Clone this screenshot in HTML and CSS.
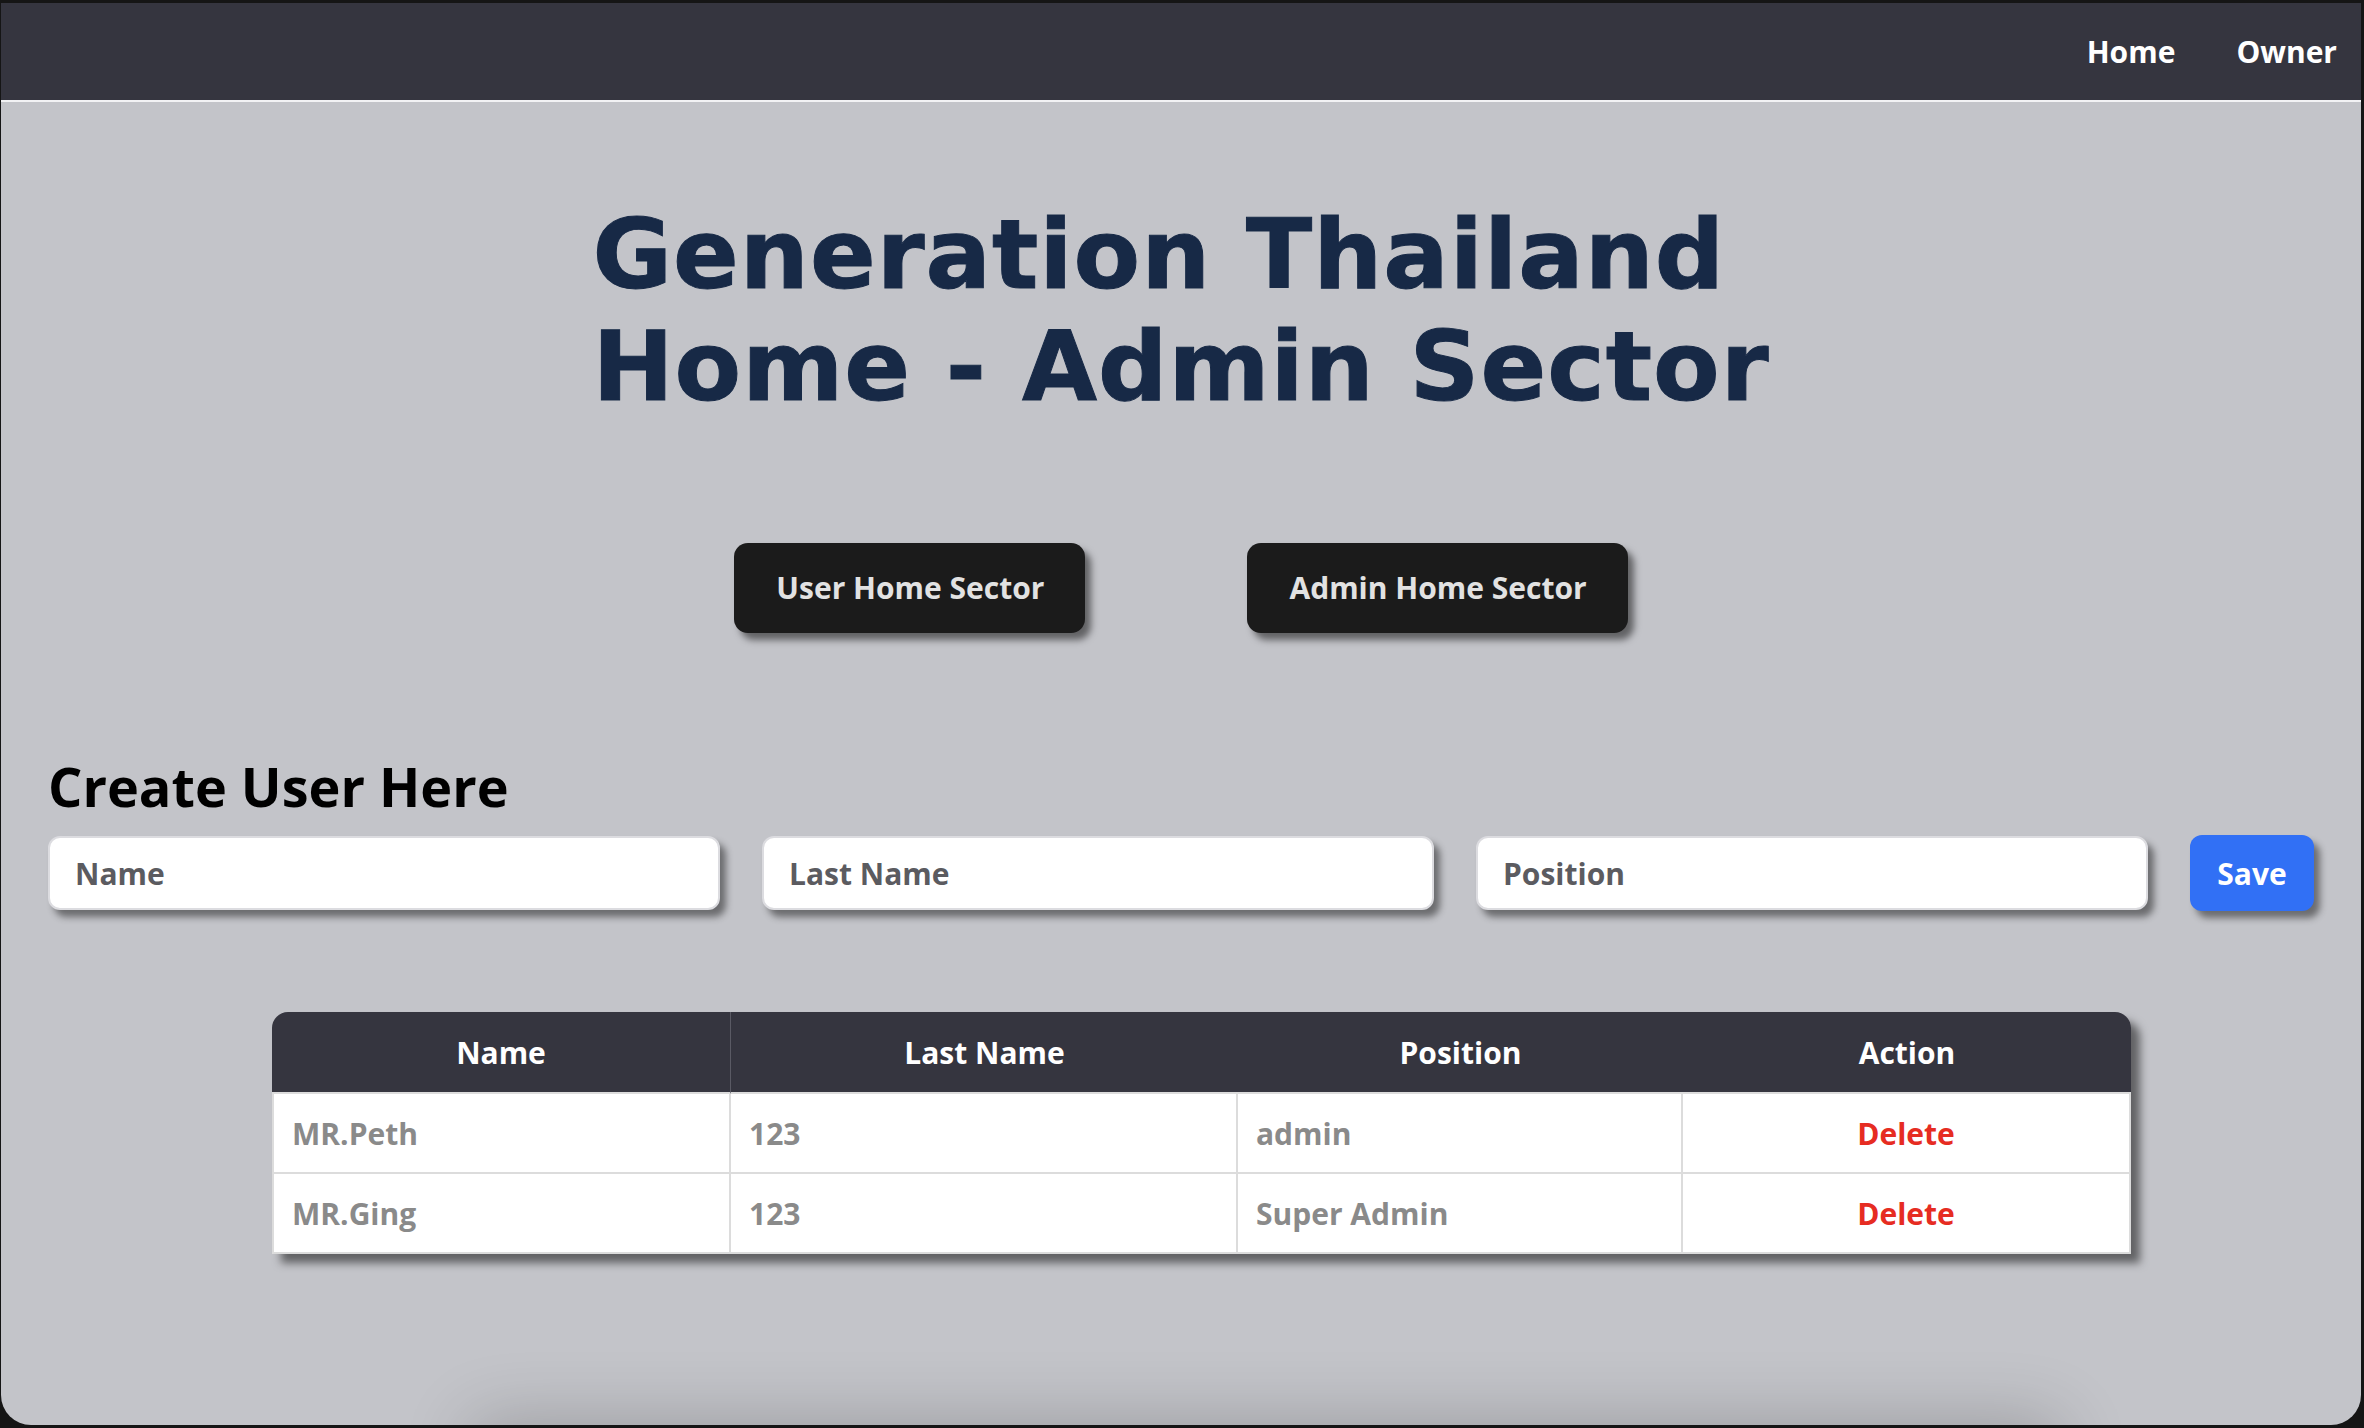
FILE: index.html
```html
<!DOCTYPE html>
<html lang="en">
<head>
<meta charset="utf-8">
<title>Generation Thailand Home - Admin Sector</title>
<link rel="stylesheet" href="styles.css">
</head>
<body>
<div class="window">
  <nav class="navbar">
    <a class="nav-link" href="#">Home</a>
    <a class="nav-link" href="#">Owner</a>
  </nav>
  <main class="main">
    <h1 class="title">Generation Thailand<br>Home - Admin Sector</h1>
    <div class="sector-buttons">
      <button class="sector-btn">User Home Sector</button>
      <button class="sector-btn">Admin Home Sector</button>
    </div>
    <h2 class="create-title">Create User Here</h2>
    <form class="create-form">
      <input class="field" type="text" placeholder="Name">
      <input class="field" type="text" placeholder="Last Name">
      <input class="field" type="text" placeholder="Position">
      <button class="save-btn" type="button">Save</button>
    </form>
    <div class="table-wrap">
      <table class="users">
        <colgroup>
          <col class="c1"><col class="c2"><col class="c3"><col class="c4">
        </colgroup>
        <thead>
          <tr><th class="first">Name</th><th>Last Name</th><th>Position</th><th class="last">Action</th></tr>
        </thead>
        <tbody>
          <tr><td>MR.Peth</td><td>123</td><td>admin</td><td class="action">Delete</td></tr>
          <tr><td>MR.Ging</td><td>123</td><td>Super Admin</td><td class="action">Delete</td></tr>
        </tbody>
      </table>
    </div>
    <div class="footer-wrap"><div class="footer-shadow"></div></div>
  </main>
</div>
</body>
</html>
```

FILE: styles.css
```css
html, body {
  margin: 0;
  padding: 0;
}
body {
  background: #151515;
  width: 2364px;
  height: 1428px;
  overflow: hidden;
  font-family: "Open Sans", "Liberation Sans", sans-serif;
}
.window {
  margin: 3px 3px 0 1px;
  height: 1422px;
  background: #c3c4c9;
  border-radius: 0 0 30px 30px;
  overflow: hidden;
}
.navbar {
  height: 97px;
  background: #35353f;
  border-bottom: 2px solid #f2f2f4;
  display: flex;
  align-items: center;
  justify-content: flex-end;
  gap: 61px;
  padding-right: 24px;
}
.nav-link {
  color: #ffffff;
  text-decoration: none;
  font-weight: 700;
  font-size: 30px;
}
.main {
  padding: 0 47px;
}
.title {
  width: fit-content;
  margin: 97px auto 0;
  font-family: "DejaVu Sans", sans-serif;
  font-weight: 700;
  font-size: 97px;
  line-height: 112px;
  letter-spacing: 1px;
  color: #172946;
  text-align: left;
  -webkit-text-stroke: 1px #172946;
}
.sector-buttons {
  margin-top: 120px;
  display: flex;
  justify-content: center;
  gap: 162px;
}
.sector-btn {
  font-family: "Open Sans", sans-serif;
  font-weight: 700;
  font-size: 30px;
  line-height: 40px;
  padding: 25px 41px 25px 42px;
  color: #e2e2e2;
  background: #1b1b1b;
  border: none;
  border-radius: 14px;
  box-shadow: 6px 7px 7px rgba(0, 0, 0, 0.5);
}
.create-title {
  margin: 116px 0 13px;
  font-weight: 700;
  font-size: 54px;
  line-height: 74px;
  color: #000;
}
.create-form {
  display: flex;
  gap: 42px;
  margin: 0;
}
.field {
  flex: 1;
  min-width: 0;
  height: 74px;
  box-sizing: border-box;
  border: 2px solid #dcdce0;
  border-radius: 12px;
  background: #fff;
  padding: 0 25px;
  font-family: "Open Sans", sans-serif;
  font-weight: 700;
  font-size: 30px;
  color: #333;
  box-shadow: 6px 7px 7px rgba(0, 0, 0, 0.45);
  outline: none;
}
.field::placeholder {
  color: #5b5b60;
  opacity: 1;
}
.save-btn {
  width: 124px;
  height: 76px;
  margin-top: -1px;
  border: none;
  border-radius: 12px;
  background: #3170f5;
  color: #fff;
  font-family: "Open Sans", sans-serif;
  font-weight: 700;
  font-size: 30px;
  box-shadow: 6px 7px 7px rgba(0, 0, 0, 0.45);
}
.table-wrap {
  margin-top: 101px;
  display: flex;
  justify-content: center;
  padding-left: 41px;
}
.users {
  width: 1859px;
  table-layout: fixed;
  border-collapse: separate;
  border-spacing: 0;
  border-radius: 16px 16px 0 0;
  box-shadow: 9px 9px 9px rgba(0, 0, 0, 0.5);
  font-size: 30px;
  font-weight: 700;
}
.c1 { width: 459px; }
.c2 { width: 507px; }
.c3 { width: 445px; }
.c4 { width: 448px; }
.users th {
  height: 80px;
  padding: 0;
  background: #35353f;
  color: #fff;
  text-align: center;
  font-weight: 700;
  border-bottom: 2px solid #dcdcdc;
}
.users th.first {
  border-top-left-radius: 16px;
  border-right: 1px solid #5a5a64;
}
.users th.last {
  border-top-right-radius: 16px;
}
.users td {
  height: 80px;
  box-sizing: border-box;
  padding: 0 18px;
  background: #fff;
  color: #8a8a8a;
  text-align: left;
  border-bottom: 2px solid #dcdcdc;
  border-right: 2px solid #dcdcdc;
}
.users td:first-child {
  border-left: 2px solid #dcdcdc;
}
.users td.action {
  text-align: center;
  color: #e62c22;
}
.footer-wrap {
  margin-top: 180px;
  display: flex;
  justify-content: center;
  padding-left: 170px;
}
.footer-shadow {
  width: 1560px;
  height: 120px;
  background: #c3c4c9;
  box-shadow: 0 0 70px 14px rgba(0, 0, 0, 0.2);
}
```
